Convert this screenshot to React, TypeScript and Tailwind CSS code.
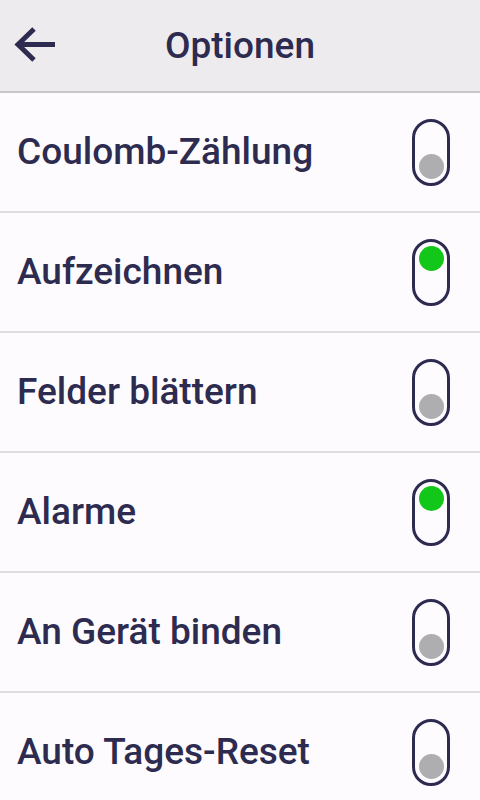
import React, { useState } from 'react';

const options = [
  { label: 'Coulomb-Zählung', on: false },
  { label: 'Aufzeichnen', on: true },
  { label: 'Felder blättern', on: false },
  { label: 'Alarme', on: true },
  { label: 'An Gerät binden', on: false },
  { label: 'Auto Tages-Reset', on: false },
];

function Toggle({ on, onClick }: { on: boolean; onClick: () => void }) {
  return (
    <button
      onClick={onClick}
      className={`w-[38px] h-[67px] rounded-full border-[3px] border-[#2d2c50] flex flex-col items-center px-[3px] py-[4px] ${
        on ? 'justify-start' : 'justify-end'
      }`}
    >
      <span className={`w-[25px] h-[25px] rounded-full ${on ? 'bg-[#12c61a]' : 'bg-[#aeadb0]'}`} />
    </button>
  );
}

export default function App() {
  const [items, setItems] = useState(options);

  const flip = (i: number) => {
    setItems(items.map((it, j) => (j === i ? { ...it, on: !it.on } : it)));
  };

  return (
    <div className="w-[480px] h-[800px] overflow-hidden bg-[#fdfbfe] text-[#2d2c50] font-['Roboto',sans-serif]">
      <div className="h-[93px] bg-[#eeebee] border-b-2 border-[#c7c6c9] flex items-center relative">
        <button className="absolute left-[14px] top-[27px] w-[42px] h-[36px]">
          <svg viewBox="0 0 42 36" className="w-[42px] h-[36px]" fill="none" stroke="#2d2c50" strokeWidth="5">
            <path d="M41 17.5H5" />
            <path d="M20 2L4 17.5L20 33" />
          </svg>
        </button>
        <h1 className="w-full text-center text-[37px] font-medium leading-none">Optionen</h1>
      </div>
      {items.map((it, i) => (
        <div key={it.label} className="h-[120px] border-b-2 border-[#dedde0] flex items-center justify-between pl-[17px] pr-[30px]">
          <span className="text-[37px] font-medium">{it.label}</span>
          <Toggle on={it.on} onClick={() => flip(i)} />
        </div>
      ))}
    </div>
  );
}
